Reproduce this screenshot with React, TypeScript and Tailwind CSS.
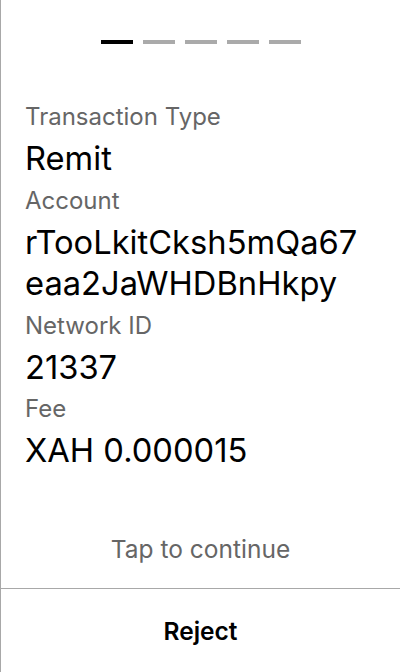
import React from "react";

const fields: { label: string; value: string[] }[] = [
  { label: "Transaction Type", value: ["Remit"] },
  { label: "Account", value: ["rTooLkitCksh5mQa67", "eaa2JaWHDBnHkpy"] },
  { label: "Network ID", value: ["21337"] },
  { label: "Fee", value: ["XAH 0.000015"] },
];

export default function App() {
  return (
    <div
      className="w-[400px] h-[672px] bg-white border-l border-[#a8a8a8] flex flex-col"
      style={{ fontFamily: "Inter, 'Noto Sans', sans-serif" }}
    >
      <div className="flex justify-center gap-[10px] pt-[40px]">
        <div className="w-[32px] h-[4px] bg-black" />
        <div className="w-[32px] h-[4px] bg-[#aaaaaa]" />
        <div className="w-[32px] h-[4px] bg-[#aaaaaa]" />
        <div className="w-[32px] h-[4px] bg-[#aaaaaa]" />
        <div className="w-[32px] h-[4px] bg-[#aaaaaa]" />
      </div>
      <div className="flex-1 flex flex-col pl-[24px] pr-[24px] pt-[52px]">
        {fields.map((f) => (
          <div key={f.label} className="flex flex-col">
            <div className="text-[24px] leading-[42px] text-[#666666]">{f.label}</div>
            {f.value.map((v) => (
              <div key={v} className="text-[32.7px] leading-[41.5px] text-black whitespace-nowrap">
                {v}
              </div>
            ))}
          </div>
        ))}
      </div>
      <div className="text-center text-[24.5px] leading-[40px] text-[#666666] pb-[19px]">
        Tap to continue
      </div>
      <div className="border-t border-[#a8a8a8] h-[84px] flex items-center justify-center pt-[2px]">
        <span className="text-[24.5px] font-semibold text-black">Reject</span>
      </div>
    </div>
  );
}
